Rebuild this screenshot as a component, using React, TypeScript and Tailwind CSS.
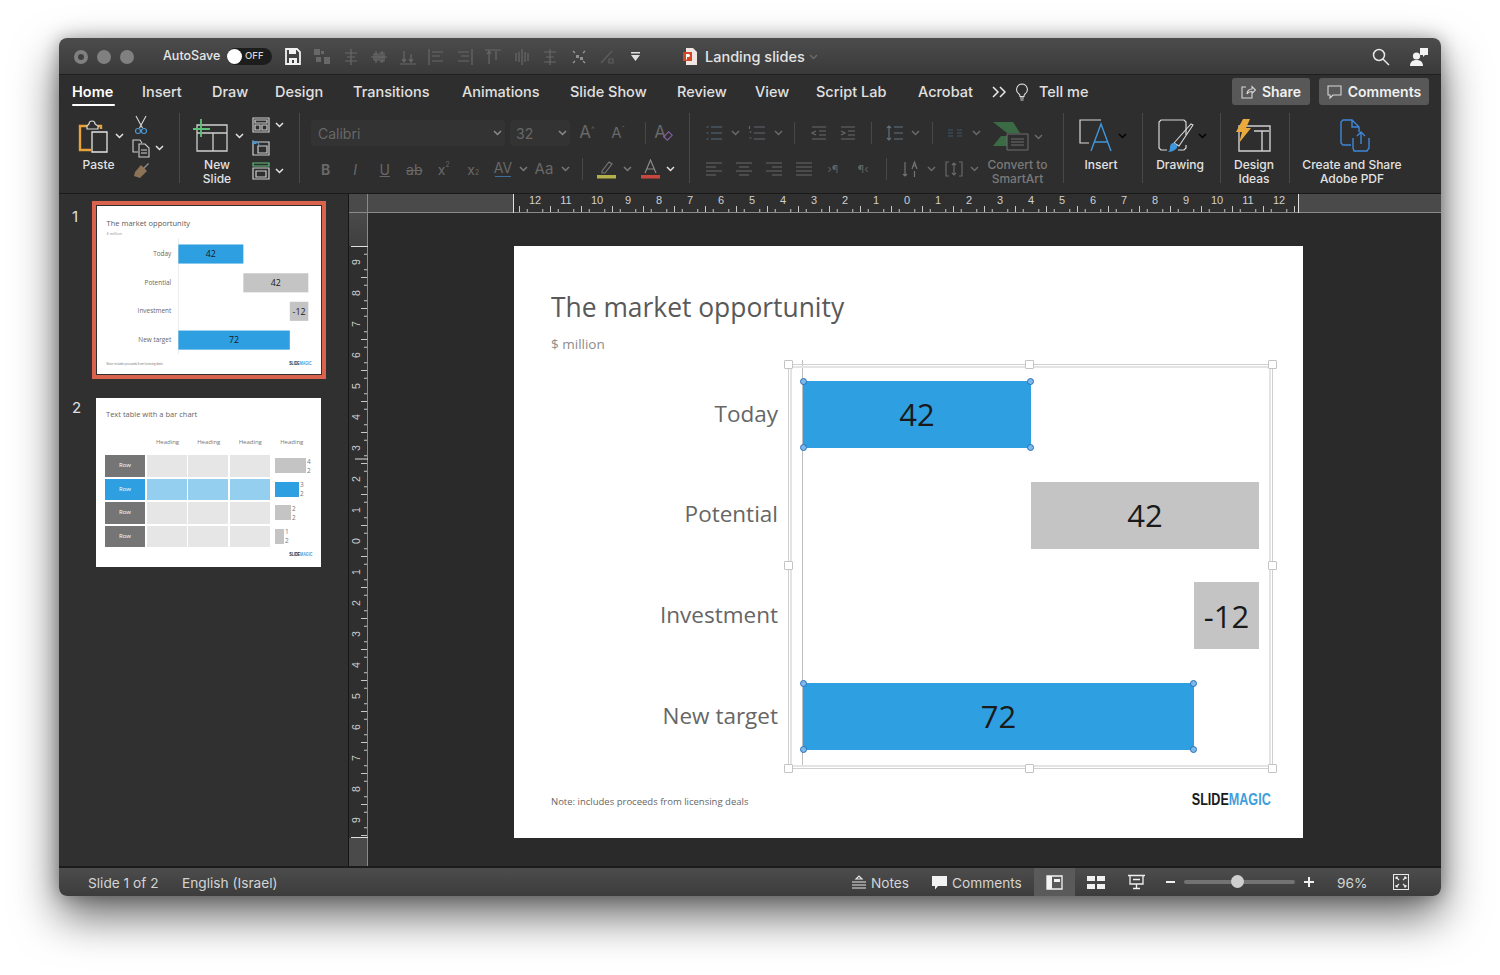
import type { ReactNode } from 'react';

const TABS = [
  { label: 'Insert', w: 'w-[70px]' },
  { label: 'Draw', w: 'w-[63px]' },
  { label: 'Design', w: 'w-[78px]' },
  { label: 'Transitions', w: 'w-[109px]' },
  { label: 'Animations', w: 'w-[108px]' },
  { label: 'Slide Show', w: 'w-[107px]' },
  { label: 'Review', w: 'w-[78px]' },
  { label: 'View', w: 'w-[61px]' },
  { label: 'Script Lab', w: 'w-[102px]' },
  { label: 'Acrobat', w: 'w-[74px]' },
];

// quick access toolbar glyphs, all greyed out in the picture
const QUICK_PATHS = [
  'M9 1v16M3 5h12M5 9h8M3 13h12',
  'M1 9h16M6 3v12M12 3v12M4 6h4v6H4zM10 5h4v8h-4z',
  'M1 16h16M5 3v11M12 6v8M3 11l2 3 2-3M10 11l2 3 2-3',
  'M2 1v16M5 4h11M5 8h8M5 13h11',
  'M16 1v16M2 4h11M5 8h8M2 13h11',
  'M1 2h16M5 3v13M12 3v9M3 6l2-3 2 3',
  'M9 1v16M3 5v8M15 5v8M6 4v10M12 4v10',
  'M9 1v16M3 4h12M5 9h8M3 14h12',
];

const SLIDE_ROWS = [
  { label: 'Today', value: '42', bar: 'w-[228px] bg-[#2e9fe0]', handles: true },
  { label: 'Potential', value: '42', bar: 'ml-[228px] w-[228px] bg-[#c4c4c4]', handles: false },
  { label: 'Investment', value: '-12', bar: 'ml-[391px] w-[65px] bg-[#c4c4c4]', handles: false },
  { label: 'New target', value: '72', bar: 'w-[391px] bg-[#2e9fe0]', handles: true },
];

const TABLE_ROWS = [
  { bar: 'w-[31px] bg-[#c4c4c4]', a: '4', b: '2', active: false },
  { bar: 'w-[24px] bg-[#2e9fe0]', a: '3', b: '2', active: true },
  { bar: 'w-[16px] bg-[#c4c4c4]', a: '2', b: '2', active: false },
  { bar: 'w-[9px] bg-[#c4c4c4]', a: '1', b: '2', active: false },
];

function Chev({ className = 'text-[#e0e0e0]' }: { className?: string }) {
  return (
    <svg width="9" height="6" viewBox="0 0 9 6" fill="none" stroke="currentColor" strokeWidth="1.5" className={className}>
      <path d="M1 1l3.5 3.5L8 1" />
    </svg>
  );
}

function Glyph({ d, size = 18, className = 'text-[#686868]' }: { d: string; size?: number; className?: string }) {
  return (
    <svg width={size} height={size} viewBox="0 0 18 18" fill="none" stroke="currentColor" strokeWidth="1.2" className={className}>
      <path d={d} />
    </svg>
  );
}

function Sep() {
  return <div className="h-[22px] w-px shrink-0 bg-[#484848]" />;
}

function Cell({ className, children }: { className: string; children?: ReactNode }) {
  return <div className={`flex shrink-0 items-center justify-center ${className}`}>{children}</div>;
}

function Label({ children, className = 'text-[#e2e2e2]' }: { children: ReactNode; className?: string }) {
  return <div className={`text-center text-[12px] font-medium leading-[14px] ${className}`}>{children}</div>;
}

function Handle({ className }: { className: string }) {
  return <div className={`absolute h-[9px] w-[9px] rounded-[1px] border border-[#c4c4c4] bg-white ${className}`} />;
}

function Dot({ className }: { className: string }) {
  return <div className={`absolute h-[7px] w-[7px] rounded-full border border-[#2b6fb5] bg-[#7db8ec] ${className}`} />;
}

function Logo({ className }: { className: string }) {
  return (
    <div className={`origin-right scale-x-[0.74] whitespace-nowrap font-['Liberation_Sans',sans-serif] font-bold ${className}`}>
      <span className="text-[#1a1a1a]">SLIDE</span>
      <span className="text-[#3f9fdc]">MAGIC</span>
    </div>
  );
}

function MarketSlide({ selected }: { selected: boolean }) {
  return (
    <div className="h-[592px] w-[789px] bg-white pt-[42px] font-['Open_Sans',sans-serif]">
      <div className="pl-[37px] text-[26.4px] leading-[38px] text-[#595959]">The market opportunity</div>
      <div className="mt-[8px] pl-[37px] text-[13.5px] leading-[20px] text-[#8c8c8c]">$ million</div>
      <div className="relative mt-[6px] flex h-[406px]">
        <div className="flex w-[288px] flex-col gap-[33.67px] pr-[24px] pt-[20px]">
          {SLIDE_ROWS.map((row) => (
            <div key={row.label} className="flex h-[67px] items-center justify-end text-[22.5px] text-[#666666]">
              {row.label}
            </div>
          ))}
        </div>
        <div className="flex flex-col gap-[33.67px] border-l border-[#bdbdbd] pt-[21px]">
          {SLIDE_ROWS.map((row) => (
            <div key={row.label} className={`relative flex h-[67px] items-center justify-center text-[31px] text-[#1a1a1a] ${row.bar}`}>
              {row.value}
              {selected && row.handles && (
                <>
                  <Dot className="-left-[3px] -top-[3px]" />
                  <Dot className="-right-[3px] -top-[3px]" />
                  <Dot className="-bottom-[3px] -left-[3px]" />
                  <Dot className="-bottom-[3px] -right-[3px]" />
                </>
              )}
            </div>
          ))}
        </div>
        {selected && (
          <div className="absolute left-[274px] top-[4px] h-[405px] w-[485px] border border-[#d0d0d0]">
            <div className="absolute inset-[1px] border-[2px] border-[#e4e4e4]" />
            <Handle className="-left-[5px] -top-[5px]" />
            <Handle className="left-[236px] -top-[5px]" />
            <Handle className="-right-[5px] -top-[5px]" />
            <Handle className="-left-[5px] top-[196px]" />
            <Handle className="-right-[5px] top-[196px]" />
            <Handle className="-bottom-[5px] -left-[5px]" />
            <Handle className="-bottom-[5px] left-[236px]" />
            <Handle className="-bottom-[5px] -right-[5px]" />
          </div>
        )}
      </div>
      <div className="mt-[21px] flex h-[24px] items-end justify-between pl-[37px] pr-[32px]">
        <div className="pb-px text-[9.5px] leading-[16px] text-[#666666]">Note: includes proceeds from licensing deals</div>
        <Logo className="text-[17px] leading-[22px]" />
      </div>
    </div>
  );
}

function TableSlide() {
  return (
    <div className="h-[169px] w-[225px] bg-white pl-[9px] font-['Open_Sans',sans-serif]">
      <div className="pl-[1px] pt-[11px] text-[7.5px] leading-[11px] text-[#666666]">Text table with a bar chart</div>
      <div className="mt-[17px] flex text-[6px] leading-[10px] text-[#777777]">
        <div className="w-[42px]" />
        <div className="w-[41px] text-center">Heading</div>
        <div className="w-[41.5px] text-center">Heading</div>
        <div className="w-[41.5px] text-center">Heading</div>
        <div className="w-[41.5px] text-center">Heading</div>
      </div>
      <div className="mt-[8px] flex flex-col gap-[2px]">
        {TABLE_ROWS.map((row, i) => (
          <div key={i} className="flex h-[21.5px] gap-[1.5px] text-[6px]">
            <div className={`flex w-[40px] items-center justify-center text-white ${row.active ? 'bg-[#2e9fe0]' : 'bg-[#757575]'}`}>Row</div>
            <div className={`w-[40px] ${row.active ? 'bg-[#95cfef]' : 'bg-[#e6e6e6]'}`} />
            <div className={`w-[40px] ${row.active ? 'bg-[#95cfef]' : 'bg-[#e6e6e6]'}`} />
            <div className={`w-[40px] ${row.active ? 'bg-[#95cfef]' : 'bg-[#e6e6e6]'}`} />
            <div className="ml-[4px] flex items-center gap-[1px]">
              <div className={`h-[15px] ${row.bar}`} />
              <div className="text-[6.5px] leading-[9px] text-[#777777]">
                {row.a}
                <br />
                {row.b}
              </div>
            </div>
          </div>
        ))}
      </div>
      <div className="mt-[3px] flex justify-end pr-[9px]">
        <Logo className="text-[5px] leading-[8px]" />
      </div>
    </div>
  );
}

function TitleBar() {
  return (
    <div className="flex h-[37px] items-center border-b border-[#1f1f1f] bg-gradient-to-b from-[#4c4c4c] to-[#3a3a3a] pl-[15px] pr-[12px] pt-px">
      <div className="flex h-[14px] w-[14px] items-center justify-center rounded-full bg-[#808080]">
        <div className="h-[6px] w-[6px] rounded-full bg-[#3f3f3f]" />
      </div>
      <div className="ml-[9px] h-[14px] w-[14px] rounded-full bg-[#808080]" />
      <div className="ml-[9px] h-[14px] w-[14px] rounded-full bg-[#808080]" />
      <div className="ml-[29px] w-[64px] text-[12.5px] font-medium text-[#e6e6e6]">AutoSave</div>
      <div className="flex h-[17px] w-[45px] items-center rounded-full bg-[#1d1d1d]">
        <div className="h-[15px] w-[15px] rounded-full bg-white" />
        <div className="ml-[3px] text-[9.5px] font-medium text-[#d8d8d8]">OFF</div>
      </div>
      <svg width="16" height="17" viewBox="0 0 16 17" className="ml-[13px] shrink-0">
        <path d="M1 1h11l3 3v12H1z" fill="none" stroke="#f2f2f2" strokeWidth="1.8" />
        <path d="M4 1h7v5H4z M4 10h8v6H4z" fill="#f2f2f2" />
        <path d="M7 12h2v3H7z" fill="#3f3f3f" />
      </svg>
      <div className="ml-[7px] flex">
        <Cell className="w-[28.5px]">
          <svg width="18" height="18" viewBox="0 0 18 18" fill="#686868">
            <path d="M1 1h6v6H1zM8 3h3v3H8zM11 9h6v7h-6zM3 9h5v5H3z" />
          </svg>
        </Cell>
        {QUICK_PATHS.map((d) => (
          <Cell key={d} className="w-[28.5px]">
            <Glyph d={d} />
          </Cell>
        ))}
        <Cell className="w-[28.5px]">
          <svg width="18" height="18" viewBox="0 0 18 18" className="text-[#6e6e6e]">
            <path d="M3 3l2 2M3 15l2-2M15 3l-2 2M15 15l-2-2" stroke="#9a9a9a" strokeWidth="1.2" />
            <path d="M6 7h3v3H6zM10 9h3v3h-3z" fill="#8f8f8f" />
          </svg>
        </Cell>
        <Cell className="w-[28.5px]">
          <Glyph d="M3 15L14 3M11 11h4v4h-4z" className="text-[#5e5e5e]" />
        </Cell>
        <Cell className="w-[28.5px]">
          <svg width="9" height="10" viewBox="0 0 9 10" fill="#e0e0e0">
            <path d="M0 0h9v1.4H0zM0 3h9L4.5 9z" />
          </svg>
        </Cell>
      </div>
      <svg width="15" height="17" viewBox="0 0 15 17" className="ml-[33px] shrink-0">
        <path d="M3 0h7l4 4v13H3z" fill="#f0e6e2" />
        <path d="M0 4h9v9H0z" fill="#d24726" />
        <path d="M3 6h2.5a1.5 1.5 0 010 3H4v2.4H3z" fill="#fff" />
      </svg>
      <div className="ml-[7px] text-[14.5px] font-medium text-[#e4e4e4]">Landing slides</div>
      <Chev className="ml-[4px] text-[#6a6a6a]" />
      <div className="ml-auto flex items-center gap-[19px]">
        <svg width="18" height="18" viewBox="0 0 18 18" fill="none" stroke="#e8e8e8" strokeWidth="1.5">
          <circle cx="7" cy="7" r="5.5" />
          <path d="M11 11l6 6" />
        </svg>
        <svg width="20" height="20" viewBox="0 0 20 20" fill="#f2f2f2">
          <path d="M11 1h8v7h-3l-2 2V8h-3z" />
          <circle cx="7.5" cy="9" r="3.6" />
          <path d="M1 19c0-4 2.5-6 6.5-6s6.5 2 6.5 6z" />
        </svg>
      </div>
    </div>
  );
}

function TabBar() {
  return (
    <div className="flex h-[35px] items-center bg-[#2e2e2e] pb-[2px] pl-[13px] pr-[12px] text-[14.5px] font-medium text-[#e0e0e0]">
      <div className="relative w-[70px] font-semibold text-white">
        Home
        <div className="absolute -bottom-[4px] left-0 h-[2px] w-[43px] rounded bg-white" />
      </div>
      {TABS.map((tab) => (
        <div key={tab.label} className={`shrink-0 ${tab.w}`}>
          {tab.label}
        </div>
      ))}
      <svg width="14" height="12" viewBox="0 0 14 12" fill="none" stroke="#e8e8e8" strokeWidth="1.5" className="shrink-0">
        <path d="M1 1l5 5-5 5M8 1l5 5-5 5" />
      </svg>
      <svg width="14" height="18" viewBox="0 0 14 18" fill="none" stroke="#dcdcdc" strokeWidth="1.1" className="ml-[9px] shrink-0">
        <path d="M7 1a5.5 5.5 0 00-3 10c.7.6 1 1.3 1 2.5h4c0-1.2.3-1.9 1-2.5A5.5 5.5 0 007 1zM5 15h4M5.5 17h3" />
      </svg>
      <div className="ml-[10px]">Tell me</div>
      <div className="ml-auto flex gap-[9px] text-[14px] font-semibold text-[#f0f0f0]">
        <div className="flex h-[27px] w-[78px] items-center justify-center gap-[6px] rounded-[3px] bg-[#585858]">
          <svg width="15" height="14" viewBox="0 0 15 14" fill="none" stroke="#d8d8d8" strokeWidth="1.1">
            <path d="M5 2H1v11h10V9M6 9c0-3 2-5 5-5V1.5L14.5 5 11 8.5V6.5C9 6.5 7 7 6 9z" />
          </svg>
          Share
        </div>
        <div className="flex h-[27px] w-[110px] items-center justify-center gap-[6px] rounded-[3px] bg-[#585858]">
          <svg width="15" height="14" viewBox="0 0 15 14" fill="none" stroke="#d8d8d8" strokeWidth="1.1">
            <path d="M1 1h13v9H6l-3 3v-3H1z" />
          </svg>
          Comments
        </div>
      </div>
    </div>
  );
}

function Ribbon() {
  return (
    <div className="flex h-[84px] border-b border-[#1a1a1a] bg-[#2e2e2e] pt-[3px]">
      {/* Clipboard */}
      <div className="flex h-[70px] w-[121px] shrink-0 border-r border-[#484848] pl-[13px]">
        <div className="w-[53px]">
          <div className="flex h-[45px] items-center pl-[6px]">
            <svg width="33" height="36" viewBox="0 0 33 36" fill="none" className="shrink-0">
              <path d="M20 8h3v3M9 8H2v24h11" stroke="#e6a23c" strokeWidth="2.4" />
              <path d="M9 8l2-2c0-4 6-4 6 0l3 2v3H9z" stroke="#d8d8d8" strokeWidth="1.2" />
              <path d="M14 14h15v20H14z" stroke="#e4e4e4" strokeWidth="1.3" />
            </svg>
            <Chev className="ml-[4px] text-[#e4e4e4]" />
          </div>
          <Label>Paste</Label>
        </div>
        <div className="ml-[3px] flex flex-col">
          <div className="flex h-[25px] items-center pl-[6px]">
            <svg width="14" height="20" viewBox="0 0 14 20" fill="none" strokeWidth="1.1">
              <path d="M2 1l6.5 12M12 1L5.5 13" stroke="#d8d8d8" />
              <circle cx="4" cy="16" r="2.5" stroke="#4a9ad4" />
              <circle cx="10" cy="16" r="2.5" stroke="#4a9ad4" />
            </svg>
          </div>
          <div className="flex h-[25px] items-center gap-[4px] pl-[3px]">
            <svg width="20" height="20" viewBox="0 0 20 20" fill="none" stroke="#cfcfcf" strokeWidth="1.1">
              <path d="M7 14H2V2h7l2 3M8 6h6l4 4v9H8zM10 12h6M10 15h6" />
            </svg>
            <Chev className="text-[#e4e4e4]" />
          </div>
          <div className="flex h-[25px] items-center pl-[4px]">
            <svg width="18" height="18" viewBox="0 0 18 18">
              <path d="M9 3l6 6-7 7-6-2 1-4z" fill="#8c7355" />
              <path d="M11 6l5-5 1 1-5 5z" fill="#8a8a8a" />
            </svg>
          </div>
        </div>
      </div>

      {/* Slides */}
      <div className="flex h-[70px] w-[120px] shrink-0 border-r border-[#484848] pl-[13px]">
        <div className="w-[48px]">
          <div className="flex h-[45px] items-center">
            <svg width="35" height="34" viewBox="0 0 35 34" fill="none" className="shrink-0">
              <path d="M4 6h30v26H4zM4 14h30M20 14v18" stroke="#cfcfcf" strokeWidth="1.3" />
              <path d="M8 0v18M0 10h17" stroke="#5fc27a" strokeWidth="1.8" />
            </svg>
            <Chev className="ml-[7px] shrink-0 text-[#e4e4e4]" />
          </div>
          <Label>
            New
            <br />
            Slide
          </Label>
        </div>
        <div className="ml-[11px] flex flex-col">
          <div className="flex h-[25px] items-center gap-[5px]">
            <svg width="18" height="16" viewBox="0 0 18 16" fill="none" stroke="#cfcfcf" strokeWidth="1.2">
              <path d="M1 1h16v14H1zM3 3h12v3H3zM3 8h5v5H3zM10 8h5v5h-5z" />
            </svg>
            <Chev className="text-[#e4e4e4]" />
          </div>
          <div className="flex h-[25px] items-center">
            <svg width="18" height="17" viewBox="0 0 18 17" fill="none" strokeWidth="1.2">
              <path d="M1 3h16v13H1zM6 7h9v7H6z" stroke="#cfcfcf" />
              <path d="M7 6C6 2 3 2 1 4M1 1v3.5h3.5" stroke="#4a9ad4" />
            </svg>
          </div>
          <div className="flex h-[25px] items-center gap-[5px]">
            <svg width="18" height="18" viewBox="0 0 18 18" fill="none" strokeWidth="1.2">
              <path d="M1 1h16v3H1z" stroke="#5fc27a" />
              <path d="M1 6h16v11H1zM4 9h10v6H4z" stroke="#cfcfcf" />
            </svg>
            <Chev className="text-[#e4e4e4]" />
          </div>
        </div>
      </div>

      {/* Font */}
      <div className="h-[70px] w-[390px] shrink-0 border-r border-[#484848] pl-[11px] pt-[7px] text-[#686868]">
        <div className="flex h-[26px] items-center">
          <div className="flex h-[26px] w-[194px] items-center justify-between rounded-[3px] bg-[#333333] pl-[7px] pr-[3px] text-[14px]">
            Calibri
            <Chev className="text-[#8a8a8a]" />
          </div>
          <div className="ml-[5px] flex h-[26px] w-[60px] items-center justify-between rounded-[3px] bg-[#333333] pl-[6px] pr-[3px] text-[14px]">
            32
            <Chev className="text-[#8a8a8a]" />
          </div>
          <Cell className="ml-[2px] w-[30px] text-[17px]">
            A<span className="-mt-[8px] text-[8px]">^</span>
          </Cell>
          <Cell className="ml-[1px] w-[30px] text-[15px]">
            A<span className="-mt-[8px] text-[8px]">ˇ</span>
          </Cell>
          <div className="ml-[12px]">
            <Sep />
          </div>
          <Cell className="ml-[4px] w-[26px] text-[17px]">
            A<span className="-ml-[2px] mt-[6px] h-[6px] w-[8px] -rotate-45 border border-[#8a5fa8]" />
          </Cell>
        </div>
        <div className="mt-[10px] flex h-[26px] items-center text-[14px]">
          <Cell className="w-[29.5px] font-bold">B</Cell>
          <Cell className="w-[29.5px] italic">I</Cell>
          <Cell className="w-[29.5px] underline">U</Cell>
          <Cell className="w-[29.5px] line-through">ab</Cell>
          <Cell className="w-[29.5px]">
            x<span className="-mt-[8px] text-[7px]">2</span>
          </Cell>
          <Cell className="w-[29.5px]">
            x<span className="mt-[8px] text-[7px]">2</span>
          </Cell>
          <Cell className="h-[26px] w-[30px] flex-col leading-[13px]">
            AV
            <span className="h-[3px] w-[16px] border-b border-[#3f6f96]" />
          </Cell>
          <Cell className="w-[10px]">
            <Chev className="text-[#7a7a7a]" />
          </Cell>
          <Cell className="w-[32px] text-[15px]">Aa</Cell>
          <Cell className="w-[10px]">
            <Chev className="text-[#7a7a7a]" />
          </Cell>
          <div className="ml-[12px]">
            <Sep />
          </div>
          <Cell className="ml-[10px] w-[26px]">
            <svg width="19" height="20" viewBox="0 0 19 20" fill="none">
              <path d="M5 12L12 3l3 2-7 9H5z" stroke="#777" strokeWidth="1.2" />
              <path d="M0 16h19v3.5H0z" fill="#b4b04c" />
            </svg>
          </Cell>
          <Cell className="w-[16px]">
            <Chev className="text-[#7a7a7a]" />
          </Cell>
          <Cell className="w-[30px]">
            <svg width="19" height="20" viewBox="0 0 19 20" fill="none">
              <path d="M4 14L9.5 1 15 14M6 10h7" stroke="#8a8a8a" strokeWidth="1.2" />
              <path d="M0 16h19v3.5H0z" fill="#c8473f" />
            </svg>
          </Cell>
          <Cell className="w-[10px]">
            <Chev />
          </Cell>
        </div>
      </div>

      {/* Paragraph */}
      <div className="flex h-[70px] w-[374px] shrink-0 border-r border-[#484848]">
        <div className="w-[295px] pl-[9px] pt-[7px]">
          <div className="flex h-[26px] items-center">
            <Cell className="w-[30px]">
              <Glyph d="M6 3h11M6 9h11M6 15h11M1.5 3h2M1.5 9h2M1.5 15h2" className="text-[#566a7c]" />
            </Cell>
            <Cell className="w-[12px]">
              <Chev className="text-[#6a6a6a]" />
            </Cell>
            <Cell className="ml-[4px] w-[24px]">
              <Glyph d="M6 3h11M6 9h11M6 15h11M1.5 2v3M1.5 8h2M1.5 14h2" className="text-[#62676c]" />
            </Cell>
            <Cell className="w-[18px]">
              <Chev className="text-[#6a6a6a]" />
            </Cell>
            <div className="ml-[7px]">
              <Sep />
            </div>
            <Cell className="ml-[12px] w-[24px]">
              <Glyph d="M2 3h14M9 7h7M9 11h7M2 15h14M6 7L2 9l4 2" />
            </Cell>
            <Cell className="ml-[5px] w-[24px]">
              <Glyph d="M2 3h14M9 7h7M9 11h7M2 15h14M2 7l4 2-4 2" />
            </Cell>
            <div className="ml-[11px]">
              <Sep />
            </div>
            <Cell className="ml-[11px] w-[24px]">
              <Glyph d="M8 3h9M8 9h9M8 15h9M3 2v14M1 4l2-2 2 2M1 14l2 2 2-2" className="text-[#62707c]" />
            </Cell>
            <Cell className="w-[16px]">
              <Chev className="text-[#6a6a6a]" />
            </Cell>
            <div className="ml-[9px]">
              <Sep />
            </div>
            <Cell className="ml-[10px] w-[24px]">
              <Glyph d="M2 6h5M2 9h5M2 12h5M11 6h5M11 9h5M11 12h5" className="text-[#3f5768]" />
            </Cell>
            <Cell className="w-[18px]">
              <Chev className="text-[#6a6a6a]" />
            </Cell>
          </div>
          <div className="mt-[10px] flex h-[26px] items-center">
            <Cell className="w-[30px]">
              <Glyph d="M1 3h16M1 7h10M1 11h16M1 15h10" />
            </Cell>
            <Cell className="w-[30px]">
              <Glyph d="M1 3h16M4 7h10M1 11h16M4 15h10" />
            </Cell>
            <Cell className="w-[30px]">
              <Glyph d="M1 3h16M7 7h10M1 11h16M7 15h10" />
            </Cell>
            <Cell className="w-[30px]">
              <Glyph d="M1 3h16M1 7h16M1 11h16M1 15h16" />
            </Cell>
            <Cell className="w-[28px] text-[11px] text-[#626262]">›¶</Cell>
            <Cell className="ml-[2px] w-[28px] text-[11px] text-[#626262]">¶‹</Cell>
            <div className="ml-[9px]">
              <Sep />
            </div>
            <Cell className="ml-[11px] w-[24px]">
              <Glyph d="M4 2v14M2 14l2 2 2-2M11 9l2.5-7L16 9M12 6h3M13.5 11v6" className="text-[#747474]" />
            </Cell>
            <Cell className="w-[18px]">
              <Chev className="text-[#6a6a6a]" />
            </Cell>
            <Cell className="ml-[2px] w-[24px]">
              <Glyph d="M4 2H1v14h3M14 2h3v14h-3M9 3v12M7 5l2-2 2 2M7 13l2 2 2-2" />
            </Cell>
            <Cell className="w-[16px]">
              <Chev className="text-[#6a6a6a]" />
            </Cell>
          </div>
        </div>
        <div className="w-[65px]">
          <div className="flex h-[45px] items-center pl-[8px] pt-[2px]">
            <svg width="36" height="29" viewBox="0 0 36 29" className="shrink-0">
              <path d="M0 0h20l7 11H14z" fill="#3b6b45" />
              <path d="M0 24l8-10h12l-6 10z" fill="#3b6b45" />
              <path d="M14 12h21v16H14z" fill="#2e2e2e" stroke="#6e6e6e" />
              <path d="M18 17h13M18 20h13M18 23h13" stroke="#6e6e6e" />
            </svg>
            <Chev className="ml-[5px] text-[#6a6a6a]" />
          </div>
          <Label className="text-[#7a7a7a]">
            Convert to
            <br />
            SmartArt
          </Label>
        </div>
      </div>

      {/* Insert */}
      <div className="h-[70px] w-[79px] shrink-0 border-r border-[#484848]">
        <div className="flex h-[45px] items-center pl-[15px]">
          <svg width="34" height="33" viewBox="0 0 34 33" fill="none" className="shrink-0">
            <path d="M22 1H1v23h9" stroke="#d8d8d8" strokeWidth="1.2" />
            <path d="M12 32L22 5l10 27M15 23h14" stroke="#3f97dc" strokeWidth="1.4" />
          </svg>
          <Chev className="ml-[5px]" />
        </div>
        <div className="w-[74px]">
          <Label>Insert</Label>
        </div>
      </div>

      {/* Drawing */}
      <div className="h-[70px] w-[78px] shrink-0 border-r border-[#484848]">
        <div className="flex h-[45px] items-center pl-[15px]">
          <svg width="36" height="34" viewBox="0 0 36 34" fill="none" className="shrink-0">
            <path d="M28 16V3l-2-2H3L1 3v26l2 2h6M20 31h6l2-2v-3" stroke="#d8d8d8" strokeWidth="1.2" />
            <path d="M16 24L33 5l2 1-14 21z" stroke="#d8d8d8" strokeWidth="1.1" />
            <path d="M10 33c3 0 6-1 9-4 1-2 0-4-3-5-3 0-4 2-4 5 0 2-1 3-2 4z" fill="#3f97dc" />
          </svg>
          <Chev className="ml-[4px]" />
        </div>
        <div className="w-[74px]">
          <Label>Drawing</Label>
        </div>
      </div>

      {/* Designer */}
      <div className="h-[70px] w-[69px] shrink-0 border-r border-[#484848]">
        <div className="flex h-[45px] items-center pl-[13px]">
          <svg width="37" height="34" viewBox="0 0 37 34" fill="none" className="shrink-0">
            <path d="M5 7h31v25H5zM20 12h15M28 12v20" stroke="#cfcfcf" strokeWidth="1.4" />
            <path d="M9 0h7l-4 9h5L5 24l3-11H2z" fill="#eaa93c" />
          </svg>
        </div>
        <div className="w-[66px]">
          <Label>
            Design
            <br />
            Ideas
          </Label>
        </div>
      </div>

      {/* Acrobat */}
      <div className="h-[70px] w-[124px] shrink-0">
        <div className="flex h-[45px] items-center pl-[50px]">
          <svg width="30" height="33" viewBox="0 0 30 33" fill="none" stroke="#3f87d8" strokeWidth="1.4" className="shrink-0">
            <path d="M11 26H3l-2-2V3l2-2h9l7 7v5M12 1v7h7" />
            <path d="M13 19v10l1 3h13l2-3V19M21 25V13M17 17l4-4 4 4" />
          </svg>
        </div>
        <Label>
          Create and Share
          <br />
          Adobe PDF
        </Label>
      </div>
    </div>
  );
}

function Sidebar() {
  return (
    <div className="w-[290px] shrink-0 border-r border-[#161616] bg-[#303030] pl-[13px] pt-[7px]">
      <div className="flex">
        <div className="w-[20px] pt-[6px] text-[15px] leading-[20px] text-[#e0e0e0]">1</div>
        <div className="border-[4px] border-[#d9634c] p-px">
          <div className="h-[168px] w-[224px] overflow-hidden bg-white">
            <div className="-ml-px origin-top-left scale-[0.285]">
              <MarketSlide selected={false} />
            </div>
          </div>
        </div>
      </div>
      <div className="mt-[19px] flex">
        <div className="w-[24px] text-[15px] leading-[20px] text-[#e0e0e0]">2</div>
        <TableSlide />
      </div>
    </div>
  );
}

function HRuler() {
  const marks = Array.from({ length: 105 }, (_, i) => i - 52);
  return (
    <svg width="786" height="19" viewBox="0 0 786 19" className="shrink-0">
      <path d="M0.5 0v19M785.5 0v19" stroke="#e0e0e0" />
      {marks.map((k) => {
        const x = 394 + k * 7.75;
        if (x < 2 || x > 784 || k % 4 === 0) return null;
        return <path key={k} d={`M${x} 18v-${k % 2 === 0 ? 6 : 3}`} stroke="#c8c8c8" />;
      })}
      {marks.map((k) =>
        k % 4 === 0 && Math.abs(k) <= 48 ? (
          <text key={k} x={394 + k * 7.75} y="10" textAnchor="middle" fontSize="11" fill="#cfcfcf" fontFamily="Liberation Sans">
            {Math.abs(k) / 4}
          </text>
        ) : null
      )}
    </svg>
  );
}

function VRuler() {
  const marks = Array.from({ length: 81 }, (_, i) => i - 40);
  return (
    <svg width="19" height="592" viewBox="0 0 19 592" className="shrink-0">
      <path d="M2 0.5h17M2 591.5h17M6 213h13" stroke="#e0e0e0" />
      {marks.map((k) => {
        const y = 295 + k * 7.75;
        if (y < 2 || y > 590 || k % 4 === 0) return null;
        return <path key={k} d={`M18 ${y}h-${k % 2 === 0 ? 6 : 3}`} stroke="#c8c8c8" />;
      })}
      {marks.map((k) => {
        const y = 295 + k * 7.75;
        return k % 4 === 0 && y > 10 && y < 582 ? (
          <text key={k} x="0" y="0" transform={`translate(11 ${y}) rotate(-90)`} textAnchor="middle" fontSize="10.5" fill="#cfcfcf" fontFamily="Liberation Sans">
            {Math.abs(k) / 4}
          </text>
        ) : null;
      })}
    </svg>
  );
}

function Editor() {
  return (
    <div className="flex min-w-0 flex-1 flex-col bg-[#2a2a2a]">
      <div className="flex h-[19px] shrink-0 border-b border-[#8a8a8a] bg-[#4a4a4a]">
        <div className="w-[19px] shrink-0 border-r border-[#8a8a8a]" />
        <div className="w-[145px] shrink-0" />
        <div className="bg-[#2f2f2f]">
          <HRuler />
        </div>
      </div>
      <div className="flex min-h-0 flex-1">
        <div className="flex w-[19px] shrink-0 flex-col border-r border-[#8a8a8a] bg-[#2f2f2f]">
          <div className="h-[33px] shrink-0 bg-gradient-to-b from-[#4a4a4a] to-[#3f3f3f]" />
          <VRuler />
          <div className="flex-1 bg-[#4a4a4a]" />
        </div>
        <div className="pl-[146px] pt-[33px]">
          <MarketSlide selected />
        </div>
      </div>
    </div>
  );
}

function StatusBar() {
  return (
    <div className="flex h-[30px] items-center border-t-2 border-[#1c1c1c] bg-gradient-to-b from-[#4c4c4c] to-[#3c3c3c] pl-[29px] text-[13.7px] text-[#d4d4d4]">
      <div className="w-[94px] pt-[2px]">Slide 1 of 2</div>
      <div className="pt-[2px]">English (Israel)</div>
      <div className="ml-auto flex h-full items-center">
        <svg width="16" height="15" viewBox="0 0 16 15" fill="none" stroke="#e8e8e8" strokeWidth="1.2">
          <path d="M1 7h14M1 10h14M1 13h14M5 4l3-3 3 3z" />
        </svg>
        <div className="ml-[4px] w-[61px] pt-[2px]">Notes</div>
        <svg width="15" height="15" viewBox="0 0 15 15" fill="#f2f2f2">
          <path d="M0 1h15v10H6l-3 3.5V11H0z" />
        </svg>
        <div className="ml-[5px] w-[82px] pt-[2px]">Comments</div>
        <div className="flex h-full w-[41px] items-center justify-center bg-[#5a5a5a]">
          <svg width="17" height="15" viewBox="0 0 17 15" fill="none">
            <path d="M1 1h15v13H1z" stroke="#f4f4f4" strokeWidth="1.3" />
            <path d="M1 1h5v13H1zM8 4h6v3H8z" fill="#f4f4f4" />
          </svg>
        </div>
        <Cell className="w-[41px]">
          <svg width="18" height="13" viewBox="0 0 18 13" fill="#f0f0f0">
            <path d="M0 0h8v5H0zM10 0h8v5h-8zM0 8h8v5H0zM10 8h8v5h-8z" />
          </svg>
        </Cell>
        <Cell className="w-[41px]">
          <svg width="17" height="16" viewBox="0 0 17 16" fill="none" stroke="#f0f0f0" strokeWidth="1.3">
            <path d="M0 1.5h17M2 2v8h13V2M8.5 10v4M5 14.5h7M5 5.5h7" />
          </svg>
        </Cell>
        <div className="ml-[9px] h-[2px] w-[9px] bg-[#f0f0f0]" />
        <div className="relative ml-[9px] h-[4px] w-[111px] rounded-full bg-[#737373]">
          <div className="absolute left-[47px] -top-[5px] h-[13px] w-[13px] rounded-full bg-[#cfcfcf]" />
        </div>
        <svg width="10" height="10" viewBox="0 0 10 10" stroke="#f0f0f0" strokeWidth="2" className="ml-[9px]">
          <path d="M0 5h10M5 0v10" />
        </svg>
        <div className="ml-[23px] w-[56px] pt-[2px]">96%</div>
        <svg width="16" height="16" viewBox="0 0 16 16" fill="none" stroke="#e8e8e8" strokeWidth="1.1">
          <path d="M0.5 0.5h15v15H0.5zM3 3l3 3M3 3h2M3 3v2M13 3l-3 3M13 3h-2M13 3v2M3 13l3-3M3 13h2M3 13v-2M13 13l-3-3M13 13h-2M13 13v-2" />
        </svg>
        <div className="w-[32px]" />
      </div>
    </div>
  );
}

export default function App() {
  return (
    <div className="h-[975px] w-[1500px] overflow-hidden bg-white pl-[59px] pt-[38px] font-['Inter','Liberation_Sans',sans-serif]">
      <div className="flex h-[858px] w-[1382px] flex-col overflow-hidden rounded-[8px] shadow-[0_20px_45px_rgba(0,0,0,0.6),0_0_18px_rgba(0,0,0,0.3)]">
        <TitleBar />
        <TabBar />
        <Ribbon />
        <div className="flex min-h-0 flex-1">
          <Sidebar />
          <Editor />
        </div>
        <StatusBar />
      </div>
    </div>
  );
}
